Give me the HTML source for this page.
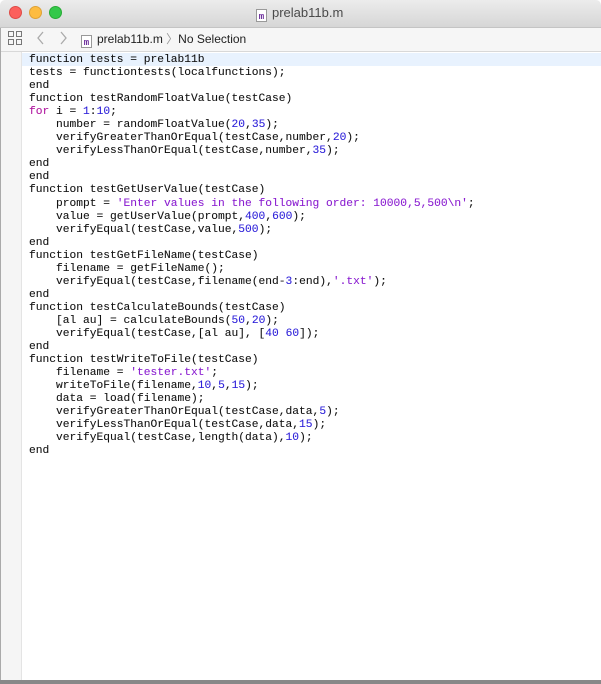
<!DOCTYPE html>
<html><head><meta charset="utf-8"><style>
*{margin:0;padding:0;box-sizing:border-box}
html,body{width:601px;height:684px;overflow:hidden;background:#fff}
body{position:relative;font-family:"Liberation Sans",sans-serif}
.title{position:absolute;left:0;top:0;width:601px;height:28px;background:linear-gradient(#ececec,#d6d6d6);border-bottom:1px solid #c4c4c4;border-radius:5px 5px 0 0}
.dot{position:absolute;top:6px;width:13px;height:13px;border-radius:50%}
.ttl{position:absolute;left:256px;top:5px;font-size:13px;color:#4a4a4a}
.micon{display:inline-block;width:11px;height:13px;border:1px solid #999;background:#fff;color:#6a2a9a;font-size:9px;font-weight:bold;text-align:center;line-height:14px;vertical-align:-2px;margin-right:5px;font-family:"Liberation Mono",monospace}
.tool{position:absolute;left:0;top:28px;width:601px;height:24px;background:#f6f6f6;border-bottom:1px solid #d8d8d8;font-size:12px;color:#222}
.gut{position:absolute;left:0;top:52px;width:22px;height:629px;background:#f5f5f5;border-right:1px solid #e4e4e4}
.hl{position:absolute;left:22px;top:53px;width:579px;height:13px;background:#e8f2fe}
pre{position:absolute;left:29px;top:54px;font-family:"Liberation Mono",monospace;font-size:11.25px;line-height:13.05px;color:#111;-webkit-text-stroke:0.08px #000}
.k{color:#b0169e;-webkit-text-stroke-color:#b0169e}.n{color:#2b1ed9;-webkit-text-stroke-color:#2b1ed9}.s{color:#8a1dd0;-webkit-text-stroke-color:#8a1dd0}
.bot{position:absolute;left:0;top:680px;width:601px;height:4px;background:#888}
.lft{position:absolute;left:0;top:28px;width:1px;height:654px;background:#aaa}
</style></head><body>
<div class="title">
<div class="dot" style="left:9px;background:#fc605c;border:1px solid #de4b46"></div>
<div class="dot" style="left:29px;background:#fdbc40;border:1px solid #dea236"></div>
<div class="dot" style="left:49px;background:#34c84a;border:1px solid #27aa35"></div>
<div class="ttl"><span class="micon">m</span>prelab11b.m</div>
</div>
<div class="tool">
<svg style="position:absolute;left:8px;top:3px" width="14" height="14"><g fill="none" stroke="#777"><rect x="0.5" y="0.5" width="5" height="5"/><rect x="8.5" y="0.5" width="5" height="5"/><rect x="0.5" y="8.5" width="5" height="5"/><rect x="8.5" y="8.5" width="5" height="5"/></g></svg>
<svg style="position:absolute;left:36px;top:3px" width="10" height="14"><path d="M7 1L2 7l5 6" fill="none" stroke="#aaa" stroke-width="1.3"/></svg>
<svg style="position:absolute;left:58px;top:3px" width="10" height="14"><path d="M3 1l5 6-5 6" fill="none" stroke="#aaa" stroke-width="1.3"/></svg>
<div style="position:absolute;left:81px;top:2px"><span class="micon">m</span>prelab11b.m <span style="color:#999">〉</span>No Selection</div>
</div>
<div class="gut"></div>
<div class="hl"></div>
<div class="lft"></div>
<pre>function tests = prelab11b
tests = functiontests(localfunctions);
end
function testRandomFloatValue(testCase)
<span class="k">for</span> i = <span class="n">1</span>:<span class="n">10</span>;
    number = randomFloatValue(<span class="n">20</span>,<span class="n">35</span>);
    verifyGreaterThanOrEqual(testCase,number,<span class="n">20</span>);
    verifyLessThanOrEqual(testCase,number,<span class="n">35</span>);
end
end
function testGetUserValue(testCase)
    prompt = <span class="s">'Enter values in the following order: 10000,5,500\n'</span>;
    value = getUserValue(prompt,<span class="n">400</span>,<span class="n">600</span>);
    verifyEqual(testCase,value,<span class="n">500</span>);
end
function testGetFileName(testCase)
    filename = getFileName();
    verifyEqual(testCase,filename(end-<span class="n">3</span>:end),<span class="s">'.txt'</span>);
end
function testCalculateBounds(testCase)
    [al au] = calculateBounds(<span class="n">50</span>,<span class="n">20</span>);
    verifyEqual(testCase,[al au], [<span class="n">40</span> <span class="n">60</span>]);
end
function testWriteToFile(testCase)
    filename = <span class="s">'tester.txt'</span>;
    writeToFile(filename,<span class="n">10</span>,<span class="n">5</span>,<span class="n">15</span>);
    data = load(filename);
    verifyGreaterThanOrEqual(testCase,data,<span class="n">5</span>);
    verifyLessThanOrEqual(testCase,data,<span class="n">15</span>);
    verifyEqual(testCase,length(data),<span class="n">10</span>);
end</pre>
<div class="bot"></div>
</body></html>
